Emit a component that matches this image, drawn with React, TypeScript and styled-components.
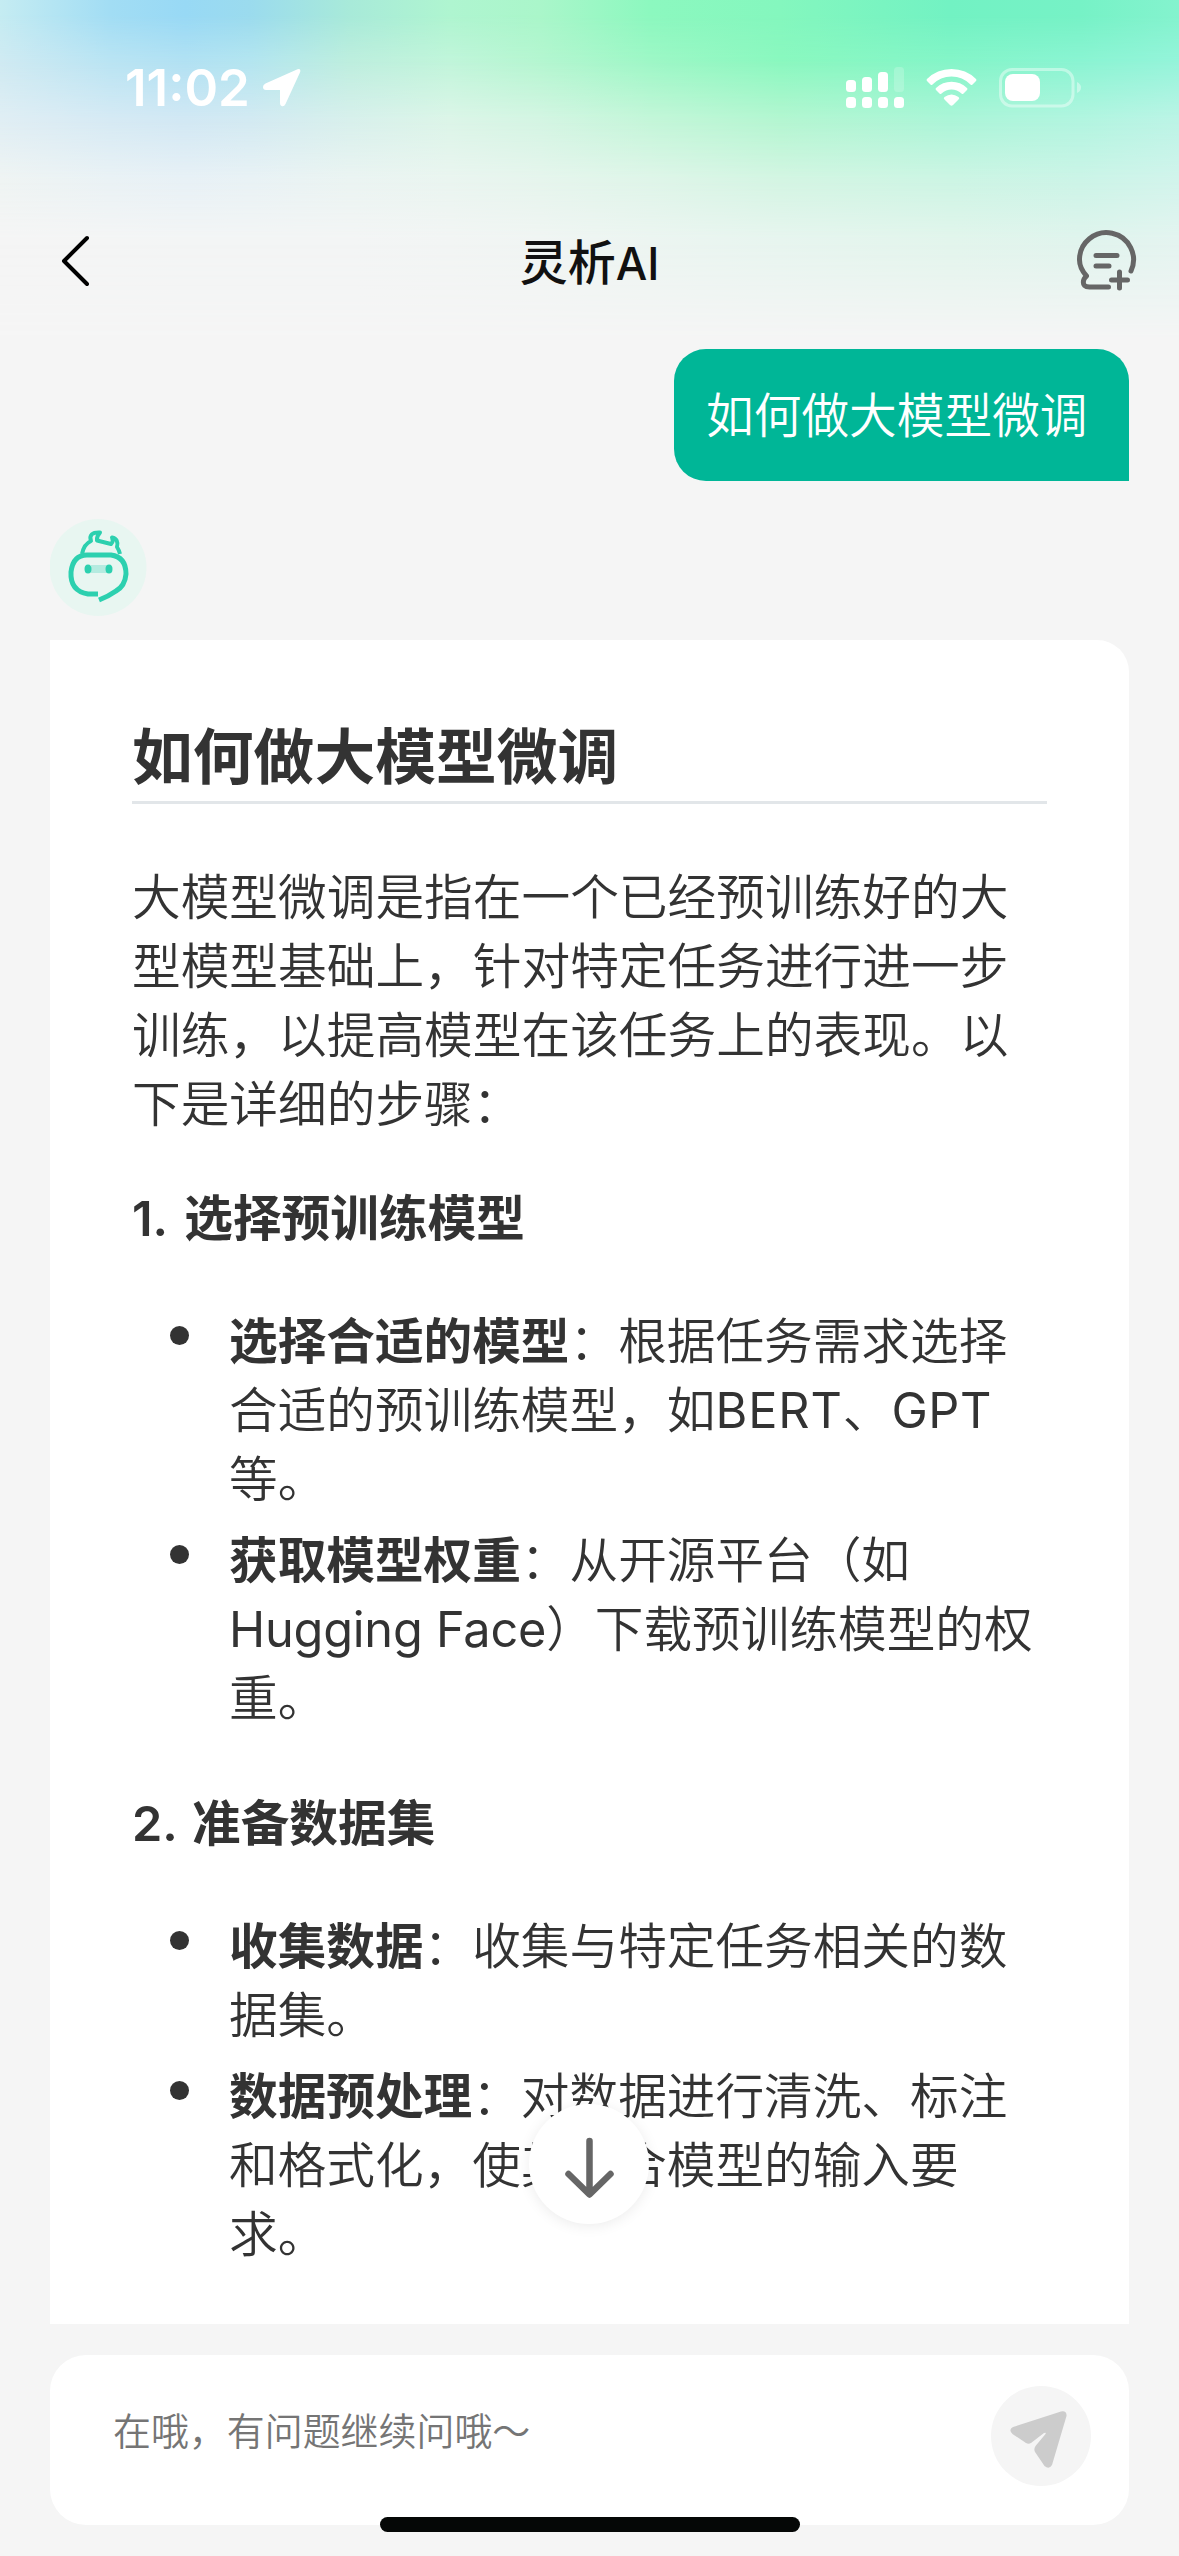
import React from "react";
import styled, { createGlobalStyle } from "styled-components";

const cjk = `"Noto Sans CJK SC", sans-serif`;

const Global = createGlobalStyle`
  * { box-sizing: border-box; margin: 0; padding: 0; }
  body { background: #f5f5f5; font-family: ${cjk}; color: #333; }
`;

const Screen = styled.div`
  position: relative;
  isolation: isolate;
  width: 1179px;
  height: 2556px;
  overflow: hidden;
  display: flex;
  flex-direction: column;
  background: #f5f5f5;
`;

/* Aurora backdrop: horizontal colour bands that dissolve into each other. */
const auroraStops = [0, 110, 185, 250, 350, 450, 540, 650, 780, 950, 1080, 1179];
const auroraBands = [
  { from: -1, to: 0, colors: "c5ecf2 a2ddf4 98d9f5 9bdbee a8ead9 aff5d0 aaf6ca 8cf8bf 84f7be 72f2c3 76f2c6 84f3ce" },
  { from: 15, to: 60, colors: "cfeaf2 b9e4f3 b1e1f3 b3e5f0 bdeede c0f5da b4f6d0 9df7c6 8af8bf 84f5c8 8af4d2 94f4da" },
  { from: 60, to: 120, colors: "e0eef4 d6eaf4 d2e8f4 d3eaf2 d8f0ec dcf5e8 d4f5e3 c4f6d9 b4f6d1 acf5d8 b2f5e0 bcf4e6" },
  { from: 120, to: 180, colors: "eff4f3 eaf2f5 e8f1f6 e9f2f5 ebf4f2 eaf5f0 e6f5ed dff5e9 d4f5e3 cdf5e4 ccf4e7 d2f4ec" },
  { from: 180, to: 240, colors: "f5f5f5 f4f5f5 f3f5f5 f3f5f5 f3f5f5 f2f5f4 f0f5f3 ecf5f1 e7f5ef e2f5ec e0f4ed e4f4f0" },
  { from: 240, to: 340, colors: "f5f5f5 f5f5f5 f5f5f5 f5f5f5 f5f5f5 f5f5f5 f5f5f5 f5f5f5 f5f5f5 f5f5f5 f5f5f5 f5f5f5" },
];

const Aurora = styled.div`
  position: absolute;
  inset: 0 0 auto;
  height: 341px;
  z-index: -1;
  display: grid;
`;

const AuroraBand = styled.div<{ $from: number; $to: number; $colors: string }>`
  grid-area: 1 / 1;
  background: linear-gradient(
    90deg,
    ${(p) => p.$colors.split(" ").map((c, i) => `#${c} ${auroraStops[i]}px`).join(", ")}
  );
  mask-image: linear-gradient(180deg, transparent ${(p) => p.$from}px, #000 ${(p) => p.$to}px);
`;

const StatusBar = styled.header`
  height: 176px;
  padding: 0 97px 0 125px;
  display: flex;
  justify-content: space-between;
  color: #fff;
`;

const StatusGroup = styled.div`
  display: flex;
  align-items: center;
  height: 176px;
  gap: 12px;
`;

const Time = styled.span`
  font: 600 51px/60px Inter, sans-serif;
  letter-spacing: 0;
`;

const NavBar = styled.nav`
  height: 173px;
  padding: 0 42px 3px 60px;
  display: grid;
  grid-template-columns: 60px 1fr 78px;
  align-items: center;
  svg { display: block; }
  svg:last-child { justify-self: end; }
`;

const Title = styled.h1`
  padding-bottom: 4px;
  text-align: center;
  font: 500 48px/60px ${cjk};
  color: #111;
  span { font: 500 44.5px/1 Inter, sans-serif; line-height: 0; }
`;

const Messages = styled.main`
  height: 1975px;
  padding: 0 50px;
  display: flex;
  flex-direction: column;
`;

const UserBubble = styled.div`
  align-self: flex-end;
  width: 455px;
  height: 132px;
  border-radius: 32px 32px 0 32px;
  background: #00b697;
  color: #fff;
  display: flex;
  align-items: center;
  padding: 0 0 6px 32px;
  font-size: 47.7px;
  font-weight: 350;
  white-space: nowrap;
`;

const Avatar = styled.div`
  margin: 38px 0 24px;
  width: 97px;
  height: 97px;
  flex: none;
`;

const Card = styled.article`
  flex: 1;
  background: #fff;
  border-radius: 0 32px 0 0;
  padding: 80px 82px 0;
`;

const Heading = styled.h2`
  height: 84px;
  border-bottom: 3px solid #e2e6e9;
  font-size: 60.8px;
  line-height: 66px;
  font-weight: 700;
  white-space: nowrap;
`;

const Paragraph = styled.p`
  margin-top: 56px;
  font-size: 48.7px;
  line-height: 69px;
  font-weight: 350;
  white-space: nowrap;
`;

const Section = styled.h3<{ $top: number; $gap: number }>`
  margin-top: ${(p) => p.$top}px;
  font: 600 48.65px/69px Inter, ${cjk};
  word-spacing: ${(p) => p.$gap}px;
  white-space: nowrap;
`;

const List = styled.ul`
  list-style: none;
  margin-top: 51px;
  display: grid;
  gap: 12px;
`;

const Item = styled.li`
  display: grid;
  grid-template-columns: 97px 1fr;
  font-size: 48.65px;
  line-height: 69px;
  font-weight: 350;
  white-space: nowrap;
  &::before {
    content: "";
    width: 19px;
    height: 19px;
    margin: 22px 0 0 38px;
    border-radius: 50%;
    background: #333;
  }
  b { font-weight: 700; }
`;

const Latin = styled.span<{ $spacing?: number }>`
  font-family: Inter, sans-serif;
  font-weight: 370;
  line-height: 0;
  letter-spacing: ${(p) => p.$spacing ?? 0}px;
`;

const ScrollDown = styled.button`
  position: absolute;
  left: 529px;
  top: 2104px;
  width: 120px;
  height: 120px;
  border: 0;
  border-radius: 50%;
  background: #fff;
  box-shadow: 0 2px 14px rgba(0, 0, 0, 0.08);
`;

const Composer = styled.footer`
  margin: 31px 50px 0;
  height: 170px;
  border-radius: 36px;
  background: #fff;
  display: flex;
  align-items: center;
  justify-content: space-between;
  padding: 0 38px 8px 63px;
`;

const Placeholder = styled.span`
  margin-bottom: 15px;
  font-size: 37.95px;
  font-weight: 350;
  color: #757575;
  white-space: nowrap;
`;

const Send = styled.button`
  width: 100px;
  height: 100px;
  border: 0;
  border-radius: 50%;
  background: #f5f5f5;
`;

const HomeIndicator = styled.div`
  position: absolute;
  left: 380px;
  top: 2517px;
  width: 420px;
  height: 15px;
  border-radius: 8px;
  background: #050706;
`;

const LocationArrow = () => (
  <svg width="40" height="40" viewBox="0 0 40 40">
    <path d="M3.5 15.5 35.5 1.2Q39 .2 38.2 4L23.5 36Q22 39 19.5 38Q18 37.500 18 35V22H4Q1 22 1 19Q1 16.500 3.500 15.500Z" fill="#fff" />
  </svg>
);

const StatusIcons = () => (
  <svg width="236" height="44" viewBox="0 0 236 44" fill="#fff">
    <rect x="0" y="14" width="10" height="12" rx="3.500" />
    <rect x="16" y="11" width="10" height="15" rx="3.500" />
    <rect x="32" y="6" width="10" height="20" rx="3.500" />
    <rect x="48" y="1" width="10" height="25" rx="3.500" opacity=".2" />
    <rect x="0" y="31" width="10" height="11" rx="3.500" />
    <rect x="16" y="31" width="10" height="11" rx="3.500" />
    <rect x="32" y="31" width="10" height="11" rx="3.500" />
    <rect x="48" y="31" width="10" height="11" rx="3.500" />
    <path d="M81 13Q91 3 105.500 3T130 13Q131 14 130 15L126.500 18.500Q125.500 19.500 124.500 18.500Q116.500 10.500 105.500 10.500T86.500 18.500Q85.500 19.500 84.500 18.500L81 15Q80 14 81 13Z" />
    <path d="M90 22Q96.500 15.800 105.500 15.800T121 22Q122 23 121 24L117.500 27.500Q116.500 28.500 115.500 27.500Q111 23.500 105.500 23.500T95.500 27.500Q94.500 28.500 93.500 27.500L90 24Q89 23 90 22Z" />
    <path d="M98.500 31Q105.500 26 112.500 31Q114 32 112.500 33.500L107 39Q105.500 40.500 104 39L98.500 33.500Q97 32 98.500 31Z" />
    <rect x="154.500" y="3.500" width="72.500" height="36.500" rx="11.500" fill="none" stroke="#fff" strokeWidth="3" opacity=".42" />
    <rect x="159" y="8" width="35" height="27" rx="8" />
    <path d="M231 16Q235 18 235 21.500T231 27Z" opacity=".42" />
  </svg>
);

const BackIcon = () => (
  <svg width="34" height="54" viewBox="0 0 34 54" fill="none" stroke="#000" strokeWidth="4" strokeLinecap="round" strokeLinejoin="round">
    <path d="M27 4 4 27 27 50" />
  </svg>
);

const NewChatIcon = () => (
  <svg width="60" height="62" viewBox="0 0 60 62" fill="none" stroke="#666" strokeWidth="5" strokeLinecap="round" strokeLinejoin="round">
    <path d="M31 57H12Q5 57 6 51Q6 49 9 46Q2 38 2 30A27 27 0 1 1 53.500 41" transform="translate(.5 0)" />
    <path d="M19 25.500H40M19 36H32M34.500 50H50.500M42.500 42V58" />
  </svg>
);

const BotAvatar = () => (
  <svg width="97" height="97" viewBox="0 0 97 97" fill="none">
    <circle cx="48" cy="48.500" r="48.500" fill="#e8f6f1" />
    <path d="M32 35Q34 25 41 22Q38 13 50 13.500Q46.500 17 47 21.500L61 25Q64 22 62 18.500Q69 20 67 28Q69 31 70 35" stroke="#2cd0af" strokeWidth="4" strokeLinejoin="round" />
    <path d="M48 75H38Q20 72 21 53Q23 36 37 36H61Q76 38 76 55Q75 67 66 72Q59 77 49 81" stroke="#2cd0af" strokeWidth="5" />
    <rect x="41" y="46" width="18" height="8" fill="#b5ebe0" />
    <ellipse cx="38" cy="50" rx="3.500" ry="4.500" fill="#2cd0af" />
    <ellipse cx="59" cy="50" rx="3.500" ry="4.500" fill="#2cd0af" />
  </svg>
);

const DownIcon = () => (
  <svg width="120" height="120" viewBox="0 0 120 120" fill="none" stroke="#666" strokeWidth="6.500" strokeLinecap="round" strokeLinejoin="round">
    <path d="M60.500 37V90M39.500 70 60.500 90.500 81.500 70" />
  </svg>
);

const SendIcon = () => (
  <svg width="100" height="100" viewBox="0 0 100 100" fill="#ccc">
    <path d="M22 41 70 25.500Q76 24.500 75.500 30L61 79Q58 84 53.500 80L44 66Q42.500 63 44.500 60L54.500 48Q55.500 46 53 47L40 57Q37.500 58.500 35 57L21.500 48Q17 43.500 22 41Z" />
  </svg>
);

export default function App() {
  return (
    <Screen>
      <Global />
      <Aurora>
        {auroraBands.map((b) => (
          <AuroraBand key={b.to} $from={b.from} $to={b.to} $colors={b.colors} />
        ))}
      </Aurora>
      <StatusBar>
        <StatusGroup><Time>11:02</Time><LocationArrow /></StatusGroup>
        <StatusGroup><StatusIcons /></StatusGroup>
      </StatusBar>
      <NavBar>
        <BackIcon />
        <Title>灵析<span>AI</span></Title>
        <NewChatIcon />
      </NavBar>
      <Messages>
        <UserBubble>如何做大模型微调</UserBubble>
        <Avatar><BotAvatar /></Avatar>
        <Card>
          <Heading>如何做大模型微调</Heading>
          <Paragraph>
            大模型微调是指在一个已经预训练好的大<br />
            型模型基础上，针对特定任务进行进一步<br />
            训练，以提高模型在该任务上的表现。以<br />
            下是详细的步骤：
          </Paragraph>
          <Section $top={48} $gap={5}>1. 选择预训练模型</Section>
          <List>
            <Item>
              <div>
                <b>选择合适的模型</b>：根据任务需求选择<br />
                合适的预训练模型，如<Latin $spacing={0.9}>BERT</Latin>、<Latin $spacing={0.6}>GPT</Latin><br />
                等。
              </div>
            </Item>
            <Item>
              <div>
                <b>获取模型权重</b>：从开源平台（如<br />
                <Latin $spacing={-0.2}>Hugging Face</Latin>）下载预训练模型的权<br />
                重。
              </div>
            </Item>
          </List>
          <Section $top={59} $gap={3}>2. 准备数据集</Section>
          <List>
            <Item>
              <div>
                <b>收集数据</b>：收集与特定任务相关的数<br />
                据集。
              </div>
            </Item>
            <Item>
              <div>
                <b>数据预处理</b>：对数据进行清洗、标注<br />
                和格式化，使其适合模型的输入要<br />
                求。
              </div>
            </Item>
          </List>
        </Card>
      </Messages>
      <Composer>
        <Placeholder>在哦，有问题继续问哦～</Placeholder>
        <Send><SendIcon /></Send>
      </Composer>
      <ScrollDown><DownIcon /></ScrollDown>
      <HomeIndicator />
    </Screen>
  );
}
